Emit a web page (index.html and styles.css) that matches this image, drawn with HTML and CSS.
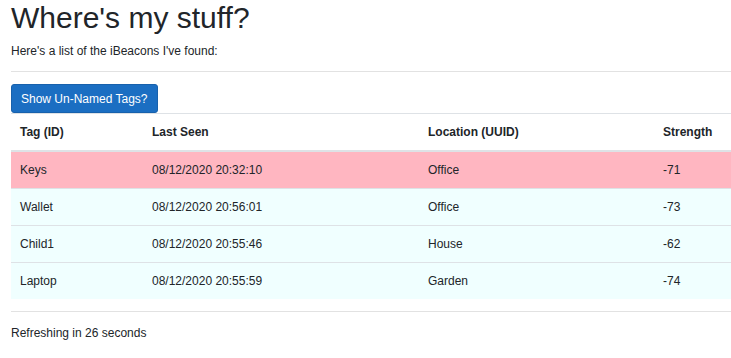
FILE: index.html
```html
<!DOCTYPE html>
<html lang="en">
<head>
    <meta charset="UTF-8">
    <meta name="viewport" content="width=device-width, initial-scale=1.0">
    <title>Where's my stuff?</title>
    <link rel="stylesheet" href="styles.css">
</head>
<body>
    <main class="container">
        <h1 class="page-title">Where's my stuff?</h1>
        <p class="lead-text">Here's a list of the iBeacons I've found:</p>

        <hr class="divider">

        <div class="actions">
            <button class="btn btn-primary" type="button">Show Un-Named Tags?</button>
        </div>

        <table class="tag-table">
            <thead>
                <tr>
                    <th class="col-tag">Tag (ID)</th>
                    <th class="col-seen">Last Seen</th>
                    <th class="col-location">Location (UUID)</th>
                    <th class="col-strength">Strength</th>
                </tr>
            </thead>
            <tbody>
                <tr class="row-stale">
                    <td>Keys</td>
                    <td>08/12/2020 20:32:10</td>
                    <td>Office</td>
                    <td>-71</td>
                </tr>
                <tr class="row-fresh">
                    <td>Wallet</td>
                    <td>08/12/2020 20:56:01</td>
                    <td>Office</td>
                    <td>-73</td>
                </tr>
                <tr class="row-fresh">
                    <td>Child1</td>
                    <td>08/12/2020 20:55:46</td>
                    <td>House</td>
                    <td>-62</td>
                </tr>
                <tr class="row-fresh">
                    <td>Laptop</td>
                    <td>08/12/2020 20:55:59</td>
                    <td>Garden</td>
                    <td>-74</td>
                </tr>
            </tbody>
        </table>

        <hr class="divider">

        <p class="refresh-note">Refreshing in <span id="countdown">26</span> seconds</p>
    </main>
</body>
</html>
```

FILE: styles.css
```css
* {
    margin: 0;
    padding: 0;
    box-sizing: border-box;
}

html {
    font-size: 12px;
}

body {
    font-family: "Liberation Sans", Arial, sans-serif;
    font-size: 1rem;
    line-height: 1.5;
    color: #212529;
    background: #fff;
}

.container {
    padding-left: 11px;
}

.page-title {
    font-size: 30px;
    font-weight: 400;
    line-height: 1.2;
    margin-bottom: 6px;
}

.lead-text {
    margin-bottom: 11px;
}

.divider {
    border: 0;
    border-top: 1px solid #e2e2e2;
    margin: 11px 0 12px;
}

/* Button */
.actions {
    display: flex;
}

.btn {
    font-family: inherit;
    font-size: 1rem;
    line-height: 1.5;
    padding: 4.5px 9px;
    border-radius: 3px;
    border: 1px solid transparent;
    cursor: pointer;
}

.btn-primary {
    color: #fff;
    background: #1b6ec2;
    border-color: #1861ac;
}

/* Table */
.tag-table {
    width: 100%;
    border-collapse: collapse;
    margin-bottom: 12px;
}

.tag-table th,
.tag-table td {
    padding: 9px;
    text-align: left;
    vertical-align: top;
    border-top: 1px solid #dee2e6;
}

.tag-table th {
    font-weight: 700;
    vertical-align: bottom;
    border-bottom: 2px solid #dee2e6;
}

.col-tag { width: 132px; }
.col-seen { width: 276px; }
.col-location { width: 235px; }

.row-stale { background: #ffb6c1; }
.row-fresh { background: #f0ffff; }

.refresh-note {
    margin-top: 0;
}
```
